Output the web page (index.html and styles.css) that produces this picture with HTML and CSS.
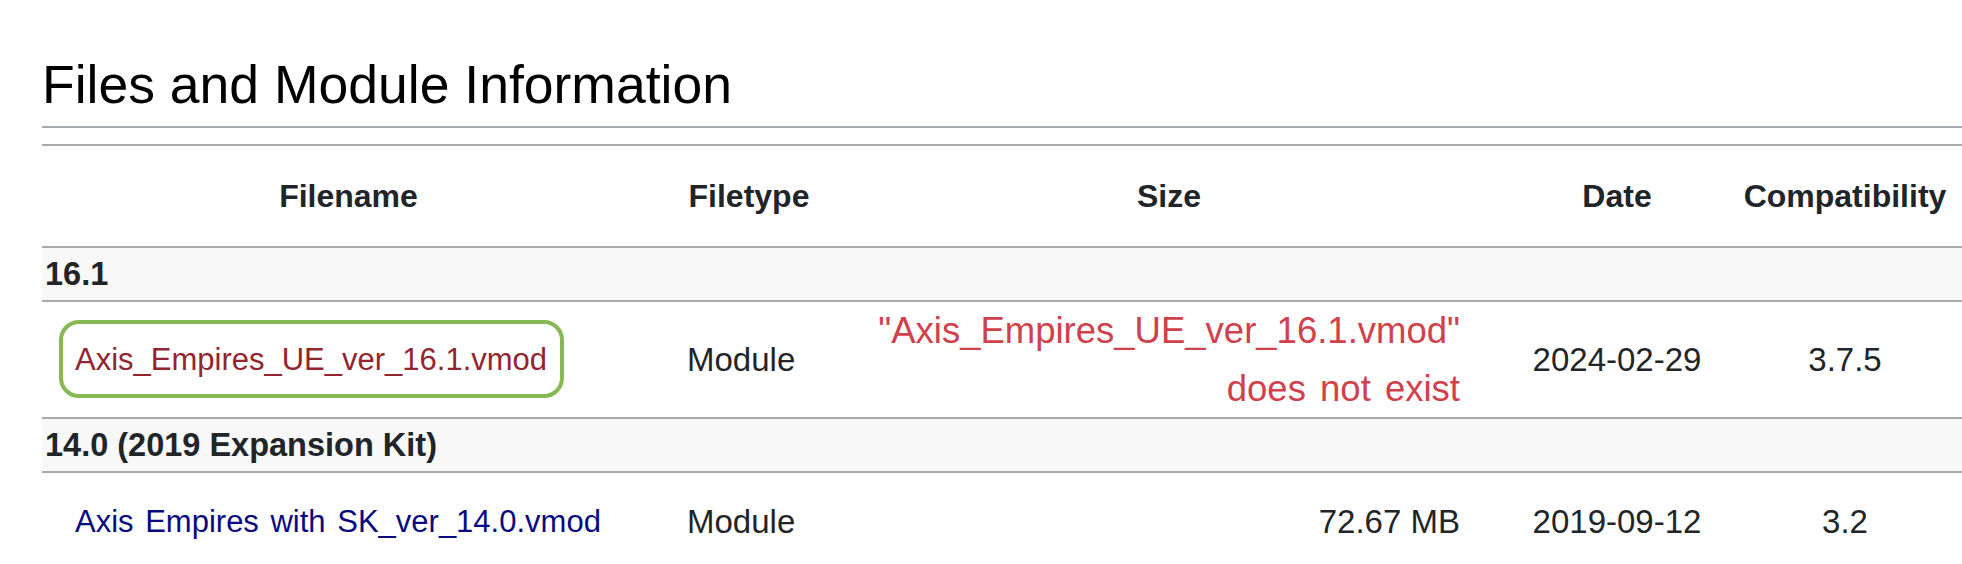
FILE: index.html
```html
<!DOCTYPE html>
<html lang="en">
<head>
<meta charset="utf-8">
<title>Files and Module Information</title>
<link rel="stylesheet" href="styles.css">
</head>
<body>
<div class="page">
  <h2 class="section-title">Files and Module Information</h2>
  <table class="files">
    <colgroup>
      <col class="c-name">
      <col class="c-type">
      <col class="c-size">
      <col class="c-date">
      <col class="c-compat">
    </colgroup>
    <thead>
      <tr>
        <th>Filename</th>
        <th>Filetype</th>
        <th>Size</th>
        <th>Date</th>
        <th class="compat">Compatibility</th>
      </tr>
    </thead>
    <tbody>
      <tr class="group">
        <td colspan="5">16.1</td>
      </tr>
      <tr class="file">
        <td class="name"><a class="link missing highlighted" href="#">Axis_Empires_UE_ver_16.1.vmod</a></td>
        <td class="type">Module</td>
        <td class="size error-cell"><span class="error">"Axis_Empires_UE_ver_16.1.vmod"<br>does not exist</span></td>
        <td class="date">2024-02-29</td>
        <td class="compat">3.7.5</td>
      </tr>
      <tr class="group">
        <td colspan="5">14.0 (2019 Expansion Kit)</td>
      </tr>
      <tr class="file">
        <td class="name"><a class="link" href="#">Axis Empires with SK_ver_14.0.vmod</a></td>
        <td class="type">Module</td>
        <td class="size">72.67 MB</td>
        <td class="date">2019-09-12</td>
        <td class="compat">3.2</td>
      </tr>
    </tbody>
  </table>
</div>
</body>
</html>
```

FILE: styles.css
```css
html, body {
  margin: 0;
  padding: 0;
  background: #ffffff;
}

body {
  font-family: "Liberation Sans", Arial, Helvetica, sans-serif;
  color: #212529;
  overflow: hidden;
}

.page {
  padding: 54px 0 0 42px;
}

.section-title {
  margin: 0 0 16px 0;
  font-size: 53.5px;
  font-weight: 400;
  line-height: 62px;
  color: #000000;
  padding-bottom: 10px;
  border-bottom: 2px solid #a7aaaf;
}

.files {
  width: 1920px;
  table-layout: fixed;
  border-collapse: separate;
  border-spacing: 0;
}

.c-name { width: 613px; }
.c-type { width: 188px; }
.c-size { width: 652px; }
.c-date { width: 244px; }
.c-compat { width: 223px; }

.files th {
  font-size: 32px;
  font-weight: 700;
  line-height: 40px;
  padding: 30px 3px;
  text-align: center;
  border-top: 2px solid #aaaaaa;
  border-bottom: 2px solid #aaaaaa;
  white-space: nowrap;
}

.files th.compat {
  padding-right: 14px;
}

.files td {
  font-size: 33px;
  line-height: 40px;
  padding: 28px 3px;
  vertical-align: middle;
  border-bottom: 2px solid #aaaaaa;
  white-space: nowrap;
}

.group td {
  background: #f8f8f8;
  font-size: 32.5px;
  font-weight: 700;
  padding: 6px 3px;
}

.files td.name {
  padding-left: 33px;
}

.files td.type {
  padding-left: 32px;
  text-align: left;
}

.files td.size {
  text-align: right;
  padding-right: 35px;
}

.files td.error-cell {
  padding-top: 0;
  padding-bottom: 0;
}

.error {
  display: block;
  font-size: 36.5px;
  line-height: 57.5px;
  word-spacing: 4px;
  color: #d0414c;
}

.files td.date {
  text-align: center;
}

.files td.compat {
  text-align: center;
  padding-right: 14px;
}

.link {
  font-size: 31px;
  word-spacing: 3px;
  color: #0a0a80;
  text-decoration: none;
}

.link.missing {
  color: #922530;
}

.highlighted {
  position: relative;
}

.highlighted::after {
  content: "";
  position: absolute;
  top: -22px;
  bottom: -21px;
  left: -16px;
  right: -17px;
  border: 4px solid #87b853;
  border-radius: 20px;
  pointer-events: none;
}
```
